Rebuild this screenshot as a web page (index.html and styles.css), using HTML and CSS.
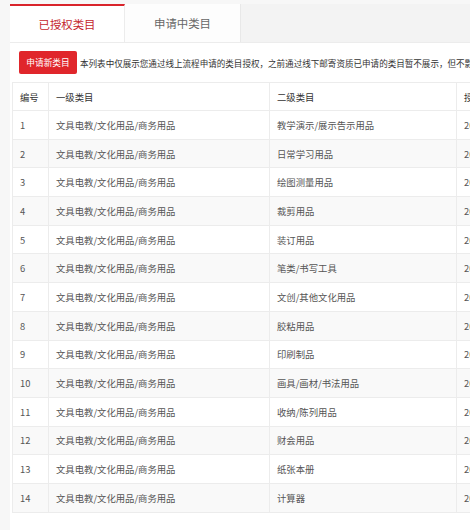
FILE: index.html
```html
<!DOCTYPE html>
<html lang="zh-CN">
<head>
<meta charset="utf-8">
<title>类目管理</title>
<link rel="stylesheet" href="styles.css">
</head>
<body>
<div class="page">
  <div class="tabbar">
    <div class="tab active">已授权类目</div>
    <div class="tab">申请中类目</div>
  </div>
  <div class="panel">
    <div class="toolbar">
      <button class="btn">申请新类目</button>
      <span class="notice">本列表中仅展示您通过线上流程申请的类目授权，之前通过线下邮寄资质已申请的类目暂不展示，但不影响您正常使用。</span>
    </div>
    <table class="grid">
      <colgroup>
        <col class="c1"><col class="c2"><col class="c3"><col class="c4">
      </colgroup>
      <thead>
        <tr><th>编号</th><th>一级类目</th><th>二级类目</th><th>授权时间</th></tr>
      </thead>
      <tbody>
        <tr><td>1</td><td>文具电教/文化用品/商务用品</td><td>教学演示/展示告示用品</td><td>2020-08-05 10:21:33</td></tr>
        <tr><td>2</td><td>文具电教/文化用品/商务用品</td><td>日常学习用品</td><td>2020-08-05 10:21:33</td></tr>
        <tr><td>3</td><td>文具电教/文化用品/商务用品</td><td>绘图测量用品</td><td>2020-08-05 10:21:33</td></tr>
        <tr><td>4</td><td>文具电教/文化用品/商务用品</td><td>裁剪用品</td><td>2020-08-05 10:21:33</td></tr>
        <tr><td>5</td><td>文具电教/文化用品/商务用品</td><td>装订用品</td><td>2020-08-05 10:21:33</td></tr>
        <tr><td>6</td><td>文具电教/文化用品/商务用品</td><td>笔类/书写工具</td><td>2020-08-05 10:21:33</td></tr>
        <tr><td>7</td><td>文具电教/文化用品/商务用品</td><td>文创/其他文化用品</td><td>2020-08-05 10:21:33</td></tr>
        <tr><td>8</td><td>文具电教/文化用品/商务用品</td><td>胶粘用品</td><td>2020-08-05 10:21:33</td></tr>
        <tr><td>9</td><td>文具电教/文化用品/商务用品</td><td>印刷制品</td><td>2020-08-05 10:21:33</td></tr>
        <tr><td>10</td><td>文具电教/文化用品/商务用品</td><td>画具/画材/书法用品</td><td>2020-08-05 10:21:33</td></tr>
        <tr><td>11</td><td>文具电教/文化用品/商务用品</td><td>收纳/陈列用品</td><td>2020-08-05 10:21:33</td></tr>
        <tr><td>12</td><td>文具电教/文化用品/商务用品</td><td>财会用品</td><td>2020-08-05 10:21:33</td></tr>
        <tr><td>13</td><td>文具电教/文化用品/商务用品</td><td>纸张本册</td><td>2020-08-05 10:21:33</td></tr>
        <tr><td>14</td><td>文具电教/文化用品/商务用品</td><td>计算器</td><td>2020-08-05 10:21:33</td></tr>
      </tbody>
    </table>
  </div>
</div>
</body>
</html>
```
FILE: styles.css
```css
html, body {
  margin: 0;
  padding: 0;
  overflow: hidden;
  background: #f7f7f7;
}
body {
  font-family: "Noto Sans CJK SC", "Microsoft YaHei", sans-serif;
  color: #333;
}
.page {
  padding: 4px 0 0 10px;
  width: 700px;
}
.tabbar {
  display: flex;
  height: 39px;
  background: #f3f3f3;
  border-bottom: 1px solid #ececec;
  box-sizing: border-box;
}
.tab {
  width: 116px;
  display: flex;
  align-items: center;
  justify-content: center;
  font-size: 11.4px;
  color: #666;
  background: #fdfdfd;
  border-right: 1px solid #e8e8e8;
  box-sizing: border-box;
}
.tab.active {
  width: 115px;
  color: #c4262d;
  background: #fff;
  border-top: 2px solid #d9242b;
  border-right: 1px solid #ececec;
  padding-bottom: 1px;
}
.panel {
  background: #fff;
  padding: 8px 0 18px 2px;
}
.toolbar {
  display: flex;
  align-items: center;
  gap: 3px;
  padding-left: 7px;
  margin-bottom: 8px;
}
.btn {
  width: 58px;
  height: 23px;
  padding: 0;
  border: 0;
  border-radius: 2px;
  background: #e0262b;
  color: #fff;
  font-family: inherit;
  font-size: 8.7px;
  flex: none;
}
.notice {
  font-size: 8.55px;
  white-space: nowrap;
  color: #333;
}
.grid {
  border-collapse: collapse;
  table-layout: fixed;
  width: 650px;
  font-size: 9.35px;
}
.c1 { width: 36px; }
.c2 { width: 221px; }
.c3 { width: 187px; }
.c4 { width: 206px; }
.grid th, .grid td {
  height: 28.7px;
  box-sizing: border-box;
  padding: 0 0 0 7px;
  text-align: left;
  font-weight: normal;
  border: 1px solid #ececec;
  white-space: nowrap;
  overflow: hidden;
}
.grid th {
  height: 28px;
  color: #333;
}
.grid td {
  color: #555;
}
.grid tbody tr:nth-child(even) td {
  background: #f9f9f9;
}
```
